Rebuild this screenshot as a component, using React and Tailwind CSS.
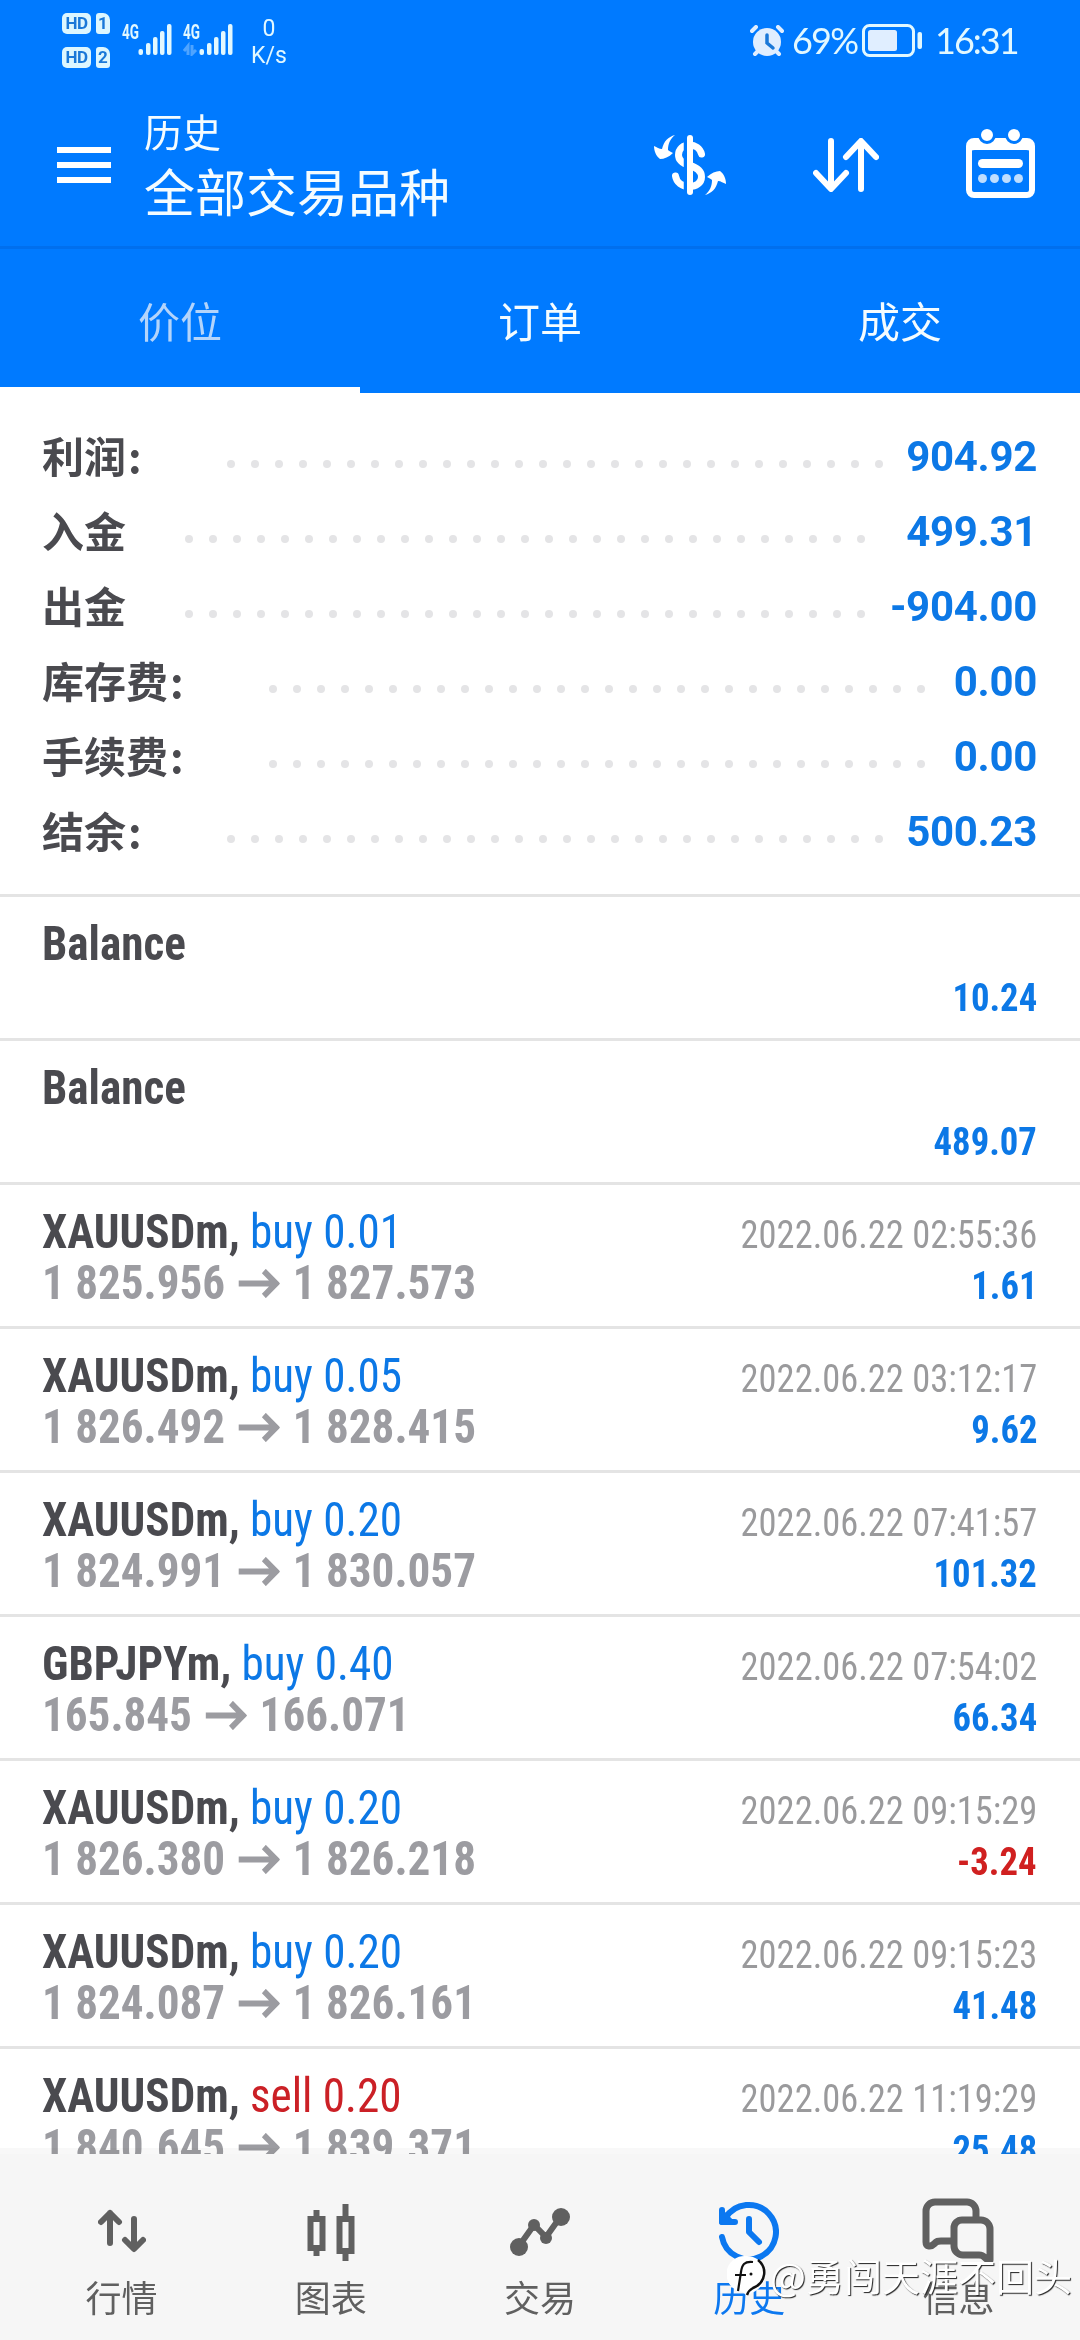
import React from "react";

const SUMMARY = [
  { label: "利润", colon: true, value: "904.92", dots: 28 },
  { label: "入金", value: "499.31", dots: 29 },
  { label: "出金", value: "-904.00", dots: 29 },
  { label: "库存费", colon: true, value: "0.00", dots: 28 },
  { label: "手续费", colon: true, value: "0.00", dots: 28 },
  { label: "结余", colon: true, value: "500.23", dots: 28 },
];

const DEALS = [
  { symbol: "Balance", profit: "10.24" },
  { symbol: "Balance", profit: "489.07" },
  { symbol: "XAUUSDm", side: "buy", volume: "0.01", open: "1 825.956", close: "1 827.573", time: "2022.06.22 02:55:36", profit: "1.61" },
  { symbol: "XAUUSDm", side: "buy", volume: "0.05", open: "1 826.492", close: "1 828.415", time: "2022.06.22 03:12:17", profit: "9.62" },
  { symbol: "XAUUSDm", side: "buy", volume: "0.20", open: "1 824.991", close: "1 830.057", time: "2022.06.22 07:41:57", profit: "101.32" },
  { symbol: "GBPJPYm", side: "buy", volume: "0.40", open: "165.845", close: "166.071", time: "2022.06.22 07:54:02", profit: "66.34" },
  { symbol: "XAUUSDm", side: "buy", volume: "0.20", open: "1 826.380", close: "1 826.218", time: "2022.06.22 09:15:29", profit: "-3.24" },
  { symbol: "XAUUSDm", side: "buy", volume: "0.20", open: "1 824.087", close: "1 826.161", time: "2022.06.22 09:15:23", profit: "41.48" },
  { symbol: "XAUUSDm", side: "sell", volume: "0.20", open: "1 840.645", close: "1 839.371", time: "2022.06.22 11:19:29", profit: "25.48" },
];

const TABS = ["价位", "订单", "成交"];

function HdBadge({ sim }) {
  return (
    <div className="flex gap-[5px] font-['Roboto'] font-bold text-[17px] leading-[21px] text-[#1a78d8]">
      <span className="w-[29px] h-[21px] rounded-[5px] bg-[#dcf6ff] text-center tracking-[-0.5px]">HD</span>
      <span className="w-[14px] h-[21px] rounded-[3px] rounded-tr-[7px] bg-[#dcf6ff] text-center">{sim}</span>
    </div>
  );
}

function Signal({ data }) {
  return (
    <svg width="50" height="32" viewBox="0 0 50 32" fill="#e2f8ff">
      <text x="0" y="15" fontFamily="Roboto" fontWeight="700" fontSize="20" textLength="17" lengthAdjust="spacingAndGlyphs">
        4G
      </text>
      {data && <path d="M1 27l4-5v9M9 21v9l4-4" fill="none" stroke="#4fa4ff" strokeWidth="3" />}
      <rect x="16.5" y="25" width="4.5" height="6" rx="2" />
      <rect x="24" y="19" width="4.5" height="12" rx="2" />
      <rect x="31" y="13" width="4.5" height="18" rx="2" />
      <rect x="38" y="7" width="4.5" height="24" rx="2" />
      <rect x="45" y="0" width="4.5" height="31" rx="2" />
    </svg>
  );
}

function StatusBar() {
  return (
    <div className="h-[84px] flex items-start pl-[62px] pr-[64px] text-[#e2f8ff] font-['Roboto']">
      <div className="flex flex-col gap-[13px] mt-[13px]">
        <HdBadge sim="1" />
        <HdBadge sim="2" />
      </div>
      <div className="flex gap-[11px] ml-[12px] mt-[24px]">
        <Signal />
        <Signal data />
      </div>
      <div className="ml-[18px] mt-[15px] w-[36px] text-center text-[23px] leading-[27px]">
        0<br />K/s
      </div>
      <div className="ml-auto flex items-center mt-[24px] h-[33px]">
        <svg width="34" height="32" viewBox="0 0 34 32" fill="none" stroke="#e0eeff" strokeLinecap="round">
          <circle cx="17" cy="17" r="14" fill="#e0eeff" stroke="none" />
          <path d="M2 6l4-4M32 6l-4-4" strokeWidth="4" />
          <path d="M5 29l3-3M29 29l-3-3" strokeWidth="4" />
          <path d="M17 10v8l6 5" stroke="#1a78d8" strokeWidth="3.5" />
        </svg>
        <span className="ml-[8px] w-[65px] text-[36px] leading-[33px] tracking-[-1.8px] font-['Lato']">69%</span>
        <svg className="ml-[5px]" width="60" height="33" viewBox="0 0 60 33">
          <rect x="1.5" y="1.5" width="50" height="30" rx="6" fill="none" stroke="#e2f8ff" strokeWidth="3" />
          <rect x="6" y="6" width="29" height="21" rx="2.5" fill="#e0eeff" />
          <rect x="55.5" y="8" width="4.5" height="17" rx="2" fill="#e2f8ff" />
        </svg>
        <span className="ml-[13px] w-[81px] text-[36px] leading-[33px] tracking-[-2px] font-['Lato'] whitespace-nowrap">16:31</span>
      </div>
    </div>
  );
}

function DollarIcon() {
  const arrow = "M21 0C14 2 10 6 8 14C5 14 3 12 0 11C0 16 2 21 6 24C10 24 15 22 19 18C17 17 15 16 14 15C14 9 16 4 21 0Z";
  return (
    <svg width="72" height="60" viewBox="0 0 72 60">
      <path
        d="M47.5 19C46 13 41 10 35.5 10C29 10 24.5 14 24.5 20C24.5 26 29 28.5 35.5 30.5C43 32.5 47.5 35.5 47.5 42C47.5 48 42 51.5 35.5 51.5C28 51.5 22.5 47.5 21.5 41"
        fill="none"
        stroke="#fff"
        strokeWidth="7"
        strokeLinecap="round"
      />
      <path d="M31.5 3v54" stroke="#007aff" strokeWidth="3.5" />
      <path d="M36 3v54" stroke="#fff" strokeWidth="6" strokeLinecap="round" />
      <path d={arrow} fill="#fff" />
      <path d={arrow} fill="#fff" transform="rotate(180 36 30)" />
    </svg>
  );
}

function SortIcon() {
  return (
    <svg width="66" height="54" viewBox="0 0 66 54" fill="none" stroke="#fff" strokeWidth="6" strokeLinecap="round" strokeLinejoin="round">
      <path d="M18 3v47M3 35l15 16 15-16M48 51V4M33 19L48 3l15 16" />
    </svg>
  );
}

function CalendarIcon() {
  return (
    <svg className="-mt-[3px]" width="69" height="69" viewBox="0 0 69 69">
      <rect x="3" y="12" width="63" height="54" rx="5" fill="none" stroke="#fff" strokeWidth="6" />
      <path d="M3 12h63v14a6 6 0 0 0-6-5H9a6 6 0 0 0-6 5z" fill="#fff" />
      <g fill="#fff" stroke="#007aff" strokeWidth="3">
        <circle cx="21" cy="6" r="7.5" />
        <circle cx="48" cy="6" r="7.5" />
      </g>
      <rect x="12" y="30" width="45" height="9" rx="4.5" fill="#fff" />
      <g fill="#bfdeff">
        <circle cx="16.5" cy="49.5" r="4.5" />
        <circle cx="28.5" cy="49.5" r="4.5" />
        <circle cx="40.5" cy="49.5" r="4.5" />
        <circle cx="52.5" cy="49.5" r="4.5" />
      </g>
    </svg>
  );
}

function Header() {
  return (
    <div className="h-[162px] flex items-center pl-[57px] pr-[45px] text-[#f4fcff]">
      <div className="flex flex-col gap-[9px] w-[54px]">
        <div className="h-[6px] bg-white" />
        <div className="h-[6px] bg-white" />
        <div className="h-[6px] bg-white" />
      </div>
      <div className="ml-[33px]">
        <div className="text-[38.5px] leading-[48px] pb-[2px]">历史</div>
        <div className="text-[51px] leading-[68px]">全部交易品种</div>
      </div>
      <div className="ml-auto flex items-center gap-[87px]">
        <DollarIcon />
        <SortIcon />
        <CalendarIcon />
      </div>
    </div>
  );
}

function Dots({ count }) {
  return (
    <svg width={count * 24 - 16} height="8">
      {Array.from({ length: count }, (_, i) => (
        <circle key={i} cx={4 + i * 24} cy="4" r="4" fill="#e4e4e6" />
      ))}
    </svg>
  );
}

function DealRow({ deal }) {
  const profitColor = deal.profit.startsWith("-") ? "text-[#d02020]" : "text-[#0c78e6]";
  const sideColor = deal.side === "sell" ? "text-[#cb2026]" : "text-[#0c78e6]";
  return (
    <div className="h-[144px] shrink-0 border-b-[3px] border-[#e4e4e4] pl-[42px] pr-[43px] pt-[21px] font-['Roboto_Condensed','Roboto',sans-serif] font-stretch-75%">
      <div className="flex items-baseline justify-between h-[51px] text-[48px] leading-[51px] whitespace-nowrap">
        <div className="origin-left scale-x-[0.94]">
          <span className="font-bold text-[#4a4a4f]">
            {deal.symbol}
            {deal.side && ","}
          </span>
          {deal.side && (
            <span className={sideColor}>
              {" "}
              {deal.side} {deal.volume}
            </span>
          )}
        </div>
        <div className="origin-right scale-x-[0.935] text-[39px] text-[#9a9a9c]">{deal.time}</div>
      </div>
      <div className="flex items-baseline justify-between h-[51px] text-[48px] leading-[51px] whitespace-nowrap font-bold">
        <div className="origin-left scale-x-[0.94] text-[#9c9ca1]">
          {deal.open || "\u00a0"}
          {deal.open && (
            <svg className="inline-block mx-[14px] align-[1px]" width="44" height="29" viewBox="0 0 44 29" fill="none" stroke="currentColor" strokeWidth="6">
              <path d="M0 14.5h40M27 2l13 12.5L27 27" />
            </svg>
          )}
          {deal.close}
        </div>
        <div className={`origin-right scale-x-[0.94] text-[39px] ${profitColor}`}>{deal.profit}</div>
      </div>
    </div>
  );
}

const QuotesIcon = (
  <svg width="48" height="60" viewBox="0 0 48 60" fill="none" stroke="currentColor" strokeWidth="6" strokeLinecap="round" strokeLinejoin="round">
    <path d="M12 42V12M3 21l9-9 9 9M36 18v29M27 39l9 9 9-9" />
  </svg>
);

const ChartIcon = (
  <svg width="48" height="60" viewBox="0 0 48 60" fill="none" stroke="currentColor" strokeWidth="6">
    <path d="M9.5 9v6M9.5 49v6M38.5 3v12M38.5 52v9" />
    <rect x="3.5" y="18" width="12" height="29" />
    <rect x="32.5" y="18" width="12" height="32" />
  </svg>
);

const TradeIcon = (
  <svg width="60" height="60" viewBox="0 0 60 60" fill="currentColor">
    <path d="M9 45L24 24 36 36 51 15" fill="none" stroke="currentColor" strokeWidth="6" />
    <circle cx="9" cy="46" r="9" />
    <circle cx="24" cy="24" r="6" />
    <circle cx="36" cy="37" r="6" />
    <circle cx="51" cy="16" r="9" />
  </svg>
);

const HistoryIcon = (
  <svg width="60" height="60" viewBox="0 0 60 60" fill="none" stroke="currentColor" strokeWidth="6" strokeLinecap="round" strokeLinejoin="round">
    <path d="M3 36A27.2 27.2 0 1 0 6.5 17" />
    <path d="M3 9v12h13" />
    <path d="M3 12v9h9z" fill="currentColor" />
    <path d="M30 18v13l10 10" />
  </svg>
);

const MessageIcon = (
  <svg width="72" height="66" viewBox="0 0 72 66" fill="none" stroke="currentColor" strokeWidth="7" strokeLinejoin="round">
    <path d="M54 20v-7a9 9 0 0 0-9-9H13a9 9 0 0 0-9 9v31c0 5 5 5 8 2 3-3 4-3 7-3h11" />
    <path d="M40 22h19a9 9 0 0 1 9 9v31c-6 0-4-5-11-5H41a9 9 0 0 1-9-9V30a8 8 0 0 1 8-8z" />
  </svg>
);

const NAV = [
  { label: "行情", icon: QuotesIcon },
  { label: "图表", icon: ChartIcon },
  { label: "交易", icon: TradeIcon },
  { label: "历史", icon: HistoryIcon, active: true },
  { label: "信息", icon: MessageIcon },
];

function Watermark() {
  return (
    <div className="absolute right-[8px] bottom-[42px] flex items-center text-white">
      <svg width="43" height="46" viewBox="0 0 43 46">
        <path d="M19 4a18 18 0 1 0-3 36l3 3c12-3 20-11 19-22A18 18 0 0 0 19 4z" fill="#fff" />
        <path d="M26 10c-9-1-11 3-12 10l-3 19M8 23h11" fill="none" stroke="#111" strokeWidth="2.2" />
        <path d="M31 8c9 7 9 22-5 28-4 2-5 4-6 7" fill="none" stroke="#111" strokeWidth="2.5" />
        <circle cx="24" cy="22" r="1.5" fill="#111" />
      </svg>
      <span className="text-[38px] leading-[46px] whitespace-nowrap [text-shadow:1px_1px_1px_#222]">@勇闯天涯不回头</span>
    </div>
  );
}

export default function App() {
  return (
    <div className="relative w-[1080px] h-[2340px] overflow-hidden flex flex-col bg-white font-['Noto_Sans_CJK_SC',sans-serif]">
      <div className="bg-[#007aff] shrink-0">
        <StatusBar />
        <Header />
        <div className="h-[147px] grid grid-cols-3 border-t-[3px] border-[#006fee]">
          {TABS.map((tab, i) => (
            <div
              key={tab}
              className={`h-[144px] pt-[1px] text-center text-[42px] leading-[139px] ${
                i === 0 ? "text-[#b3d4fb] border-b-[6px] border-white" : "text-[#f4fcff]"
              }`}
            >
              {tab}
            </div>
          ))}
        </div>
      </div>

      <div className="h-[504px] shrink-0 border-b-[3px] border-[#e4e4e4] pt-[26px] pl-[42px] pr-[43px]">
        {SUMMARY.map((row) => (
          <div key={row.label} className="flex items-center h-[75px] text-[42px] leading-[75px] font-bold">
            <span className="text-[#4a4a4f] -mt-[5px]">
              {row.label}
              {row.colon && <span className="ml-[2px] mr-[1px]">:</span>}
            </span>
            <div className={`mt-[14px] ${row.colon ? "ml-[84px]" : "ml-[59px]"}`}>
              <Dots count={row.dots} />
            </div>
            <span className="ml-auto text-[#0c78e6] font-['Roboto'] tracking-[-0.3px]">{row.value}</span>
          </div>
        ))}
      </div>

      <div className="relative flex-1 min-h-0 overflow-hidden flex flex-col">
        {DEALS.map((deal, i) => (
          <DealRow key={i} deal={deal} />
        ))}
        {/* soft edge above the bottom bar */}
        <div className="absolute inset-x-0 bottom-0 h-[6px] mix-blend-multiply bg-[#f8f8f8]" />
      </div>

      <div className="h-[186px] shrink-0 bg-[#f6f6f6] px-[17px] pt-[44px] grid grid-cols-5">
        {NAV.map((item) => (
          <div key={item.label} className={`flex flex-col items-center ${item.active ? "text-[#0c78f0]" : "text-[#606060]"}`}>
            <div className="h-[66px] flex items-center">{item.icon}</div>
            <div className="mt-[4px] text-[36px] leading-[56px]">{item.label}</div>
          </div>
        ))}
      </div>
      <Watermark />
    </div>
  );
}
